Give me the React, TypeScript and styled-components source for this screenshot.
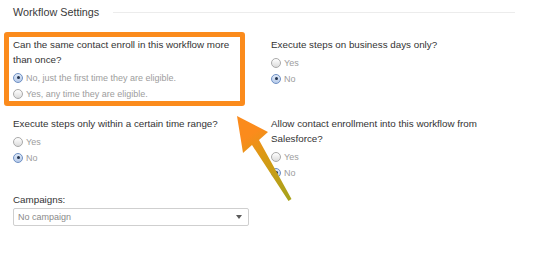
import styled, { createGlobalStyle } from 'styled-components';

const GlobalStyle = createGlobalStyle`
  html, body {
    margin: 0;
    padding: 0;
    background: #ffffff;
  }
  body {
    font-family: "Liberation Sans", Arial, Helvetica, sans-serif;
    -webkit-font-smoothing: antialiased;
  }
`;

const Page = styled.div`
  position: relative;
  width: 535px;
  height: 256px;
  box-sizing: border-box;
  padding: 5px 20px 0 13px;
  overflow: hidden;
`;

const Header = styled.div`
  display: flex;
  align-items: center;
  height: 15px;
`;

const Title = styled.h2`
  margin: 0;
  font-size: 10.8px;
  line-height: 15px;
  font-weight: normal;
  color: #3a3a3a;
  white-space: nowrap;
`;

const Rule = styled.div`
  flex: 1;
  height: 1px;
  margin-left: 14px;
  background: #ececec;
`;

const SettingsGrid = styled.div`
  display: grid;
  grid-template-columns: 236px 1fr;
  column-gap: 22px;
  row-gap: 14px;
  margin-top: 16.5px;
`;

const Field = styled.div`
  position: relative;
  display: flex;
  flex-direction: column;
`;

const Highlight = styled.div`
  position: absolute;
  top: -5px;
  left: -9px;
  right: 4px;
  bottom: -4px;
  border: 5px solid #fb8b1c;
  border-radius: 3px;
  pointer-events: none;
`;

const Label = styled.div`
  font-size: 9.8px;
  line-height: 15px;
  color: #333;
  margin-bottom: 3px;
`;

const Option = styled.label`
  display: flex;
  align-items: center;
  gap: 3px;
  height: 16px;
  font-size: 9px;
  color: #9d9d9d;
`;

const Radio = styled.span<{ $checked?: boolean }>`
  position: relative;
  width: 10px;
  height: 10px;
  box-sizing: border-box;
  border-radius: 50%;
  border: 1px solid ${(p) => (p.$checked ? '#6d8fc4' : '#a9a9a9')};
  background: ${(p) =>
    p.$checked
      ? 'linear-gradient(#dfe9f7, #b7cbea)'
      : 'linear-gradient(#ffffff, #dcdcdc)'};

  &::after {
    content: '';
    display: ${(p) => (p.$checked ? 'block' : 'none')};
    position: absolute;
    top: 2.5px;
    left: 2.5px;
    width: 3px;
    height: 3px;
    border-radius: 50%;
    background: #23344f;
  }
`;

const CampaignField = styled.div`
  display: flex;
  flex-direction: column;
  width: 236px;
  margin-top: 11px;
`;

const CampaignLabel = styled.div`
  font-size: 9.8px;
  line-height: 15px;
  color: #333;
  margin-bottom: 1.5px;
`;

const Select = styled.div`
  display: flex;
  align-items: center;
  justify-content: space-between;
  height: 18px;
  box-sizing: border-box;
  padding: 0 6px 0 4px;
  border: 1px solid #cfcfcf;
  border-radius: 2px;
  font-size: 9px;
  color: #8a8a8a;
`;

const Caret = styled.span`
  width: 0;
  height: 0;
  border-left: 3.5px solid transparent;
  border-right: 3.5px solid transparent;
  border-top: 4px solid #5a5a5a;
`;

const ArrowLayer = styled.svg`
  position: absolute;
  top: 0;
  left: 0;
  pointer-events: none;
`;

type Choice = { text: string; checked?: boolean };

const RadioGroup = ({ choices }: { choices: Choice[] }) => (
  <>
    {choices.map((c) => (
      <Option key={c.text}>
        <Radio $checked={c.checked} />
        {c.text}
      </Option>
    ))}
  </>
);

const yesNo: Choice[] = [{ text: 'Yes' }, { text: 'No', checked: true }];

export default function App() {
  return (
    <>
      <GlobalStyle />
      <Page>
        <Header>
          <Title>Workflow Settings</Title>
          <Rule />
        </Header>

        <SettingsGrid>
          <Field>
            <Label>
              Can the same contact enroll in this workflow more
              <br />
              than once?
            </Label>
            <RadioGroup
              choices={[
                { text: 'No, just the first time they are eligible.', checked: true },
                { text: 'Yes, any time they are eligible.' },
              ]}
            />
            <Highlight />
          </Field>

          <Field>
            <Label>Execute steps on business days only?</Label>
            <RadioGroup choices={yesNo} />
          </Field>

          <Field>
            <Label>Execute steps only within a certain time range?</Label>
            <RadioGroup choices={yesNo} />
          </Field>

          <Field>
            <Label>
              Allow contact enrollment into this workflow from
              <br />
              Salesforce?
            </Label>
            <RadioGroup choices={yesNo} />
          </Field>
        </SettingsGrid>

        <CampaignField>
          <CampaignLabel>Campaigns:</CampaignLabel>
          <Select>
            No campaign
            <Caret />
          </Select>
        </CampaignField>

        <ArrowLayer width="535" height="256" viewBox="0 0 535 256">
          <defs>
            <linearGradient id="arrowFill" x1="250" y1="135" x2="288" y2="196" gradientUnits="userSpaceOnUse">
              <stop offset="0" stopColor="#fb8b1c" />
              <stop offset="0.35" stopColor="#d99a14" />
              <stop offset="1" stopColor="#aaa21a" />
            </linearGradient>
          </defs>
          <polygon
            points="237,116 268,132 259,140 291.5,199 288.5,201 252,145 243,153"
            fill="url(#arrowFill)"
          />
        </ArrowLayer>
      </Page>
    </>
  );
}
